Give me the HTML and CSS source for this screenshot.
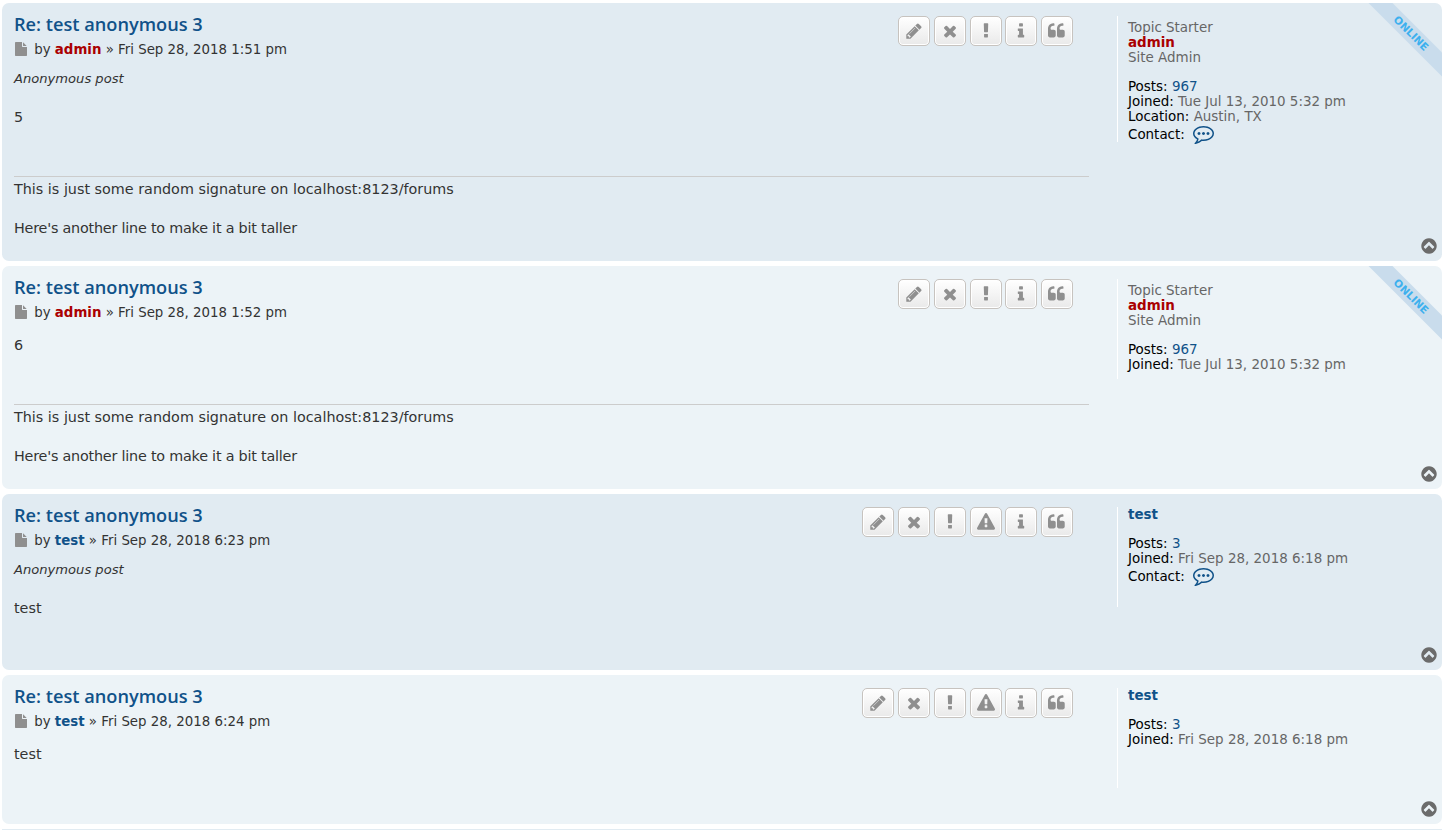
FILE: index.html
```html
<!DOCTYPE html>
<html lang="en">
<head>
    <meta charset="UTF-8">
    <meta name="viewport" content="width=device-width, initial-scale=1.0">
    <title>Re: test anonymous 3</title>
    <link rel="stylesheet" href="styles.css">
</head>
<body>
    <svg class="icon-defs" xmlns="http://www.w3.org/2000/svg">
        <symbol id="i-pencil" viewBox="0 0 1792 1792"><path d="M491 1536l91-91-235-235-91 91v107h128v128h107zm523-928q0-22-22-22-10 0-17 7l-542 542q-7 7-7 17 0 22 22 22 10 0 17-7l542-542q7-7 7-17zm-54-192l416 416-832 832h-416v-416zm683 96q0 53-37 90l-166 166-416-416 166-165q36-38 90-38 53 0 91 38l235 234q37 39 37 91z"/></symbol>
        <symbol id="i-times" viewBox="0 0 1792 1792"><path d="M1490 1322q0 40-28 68l-136 136q-28 28-68 28t-68-28l-294-294-294 294q-28 28-68 28t-68-28l-136-136q-28-28-28-68t28-68l294-294-294-294q-28-28-28-68t28-68l136-136q28-28 68-28t68 28l294 294 294-294q28-28 68-28t68 28l136 136q28 28 28 68t-28 68l-294 294 294 294q28 28 28 68z"/></symbol>
        <symbol id="i-excl" viewBox="0 0 1792 1792"><path d="M1088 1248v224q0 26-19 45t-45 19h-256q-26 0-45-19t-19-45v-224q0-26 19-45t45-19h256q26 0 45 19t19 45zm30-1056l-28 768q-1 26-20.5 45t-45.5 19h-256q-26 0-45.5-19t-20.5-45l-28-768q-1-26 17.5-45t44.5-19h320q26 0 44.5 19t17.5 45z"/></symbol>
        <symbol id="i-warn" viewBox="0 0 1792 1792"><path d="M1024 1375v-190q0-14-9.5-23.5t-22.5-9.5h-192q-13 0-22.5 9.5t-9.5 23.5v190q0 14 9.5 23.5t22.5 9.5h192q13 0 22.5-9.5t9.5-23.5zm-2-374l18-459q0-12-10-19-13-11-24-11h-220q-11 0-24 11-10 7-10 21l17 457q0 10 10 16.5t24 6.5h185q14 0 23.5-6.5t10.5-16.5zm-14-934l768 1408q35 63-2 126-17 29-46.5 46t-63.5 17h-1536q-34 0-63.5-17t-46.5-46q-37-63-2-126l768-1408q17-31 47-49t65-18 65 18 47 49z"/></symbol>
        <symbol id="i-info" viewBox="0 0 1792 1792"><path d="M1216 1344v128q0 26-19 45t-45 19h-512q-26 0-45-19t-19-45v-128q0-26 19-45t45-19h64v-384h-64q-26 0-45-19t-19-45v-128q0-26 19-45t45-19h384q26 0 45 19t19 45v576h64q26 0 45 19t19 45zm-128-1152v192q0 26-19 45t-45 19h-256q-26 0-45-19t-19-45v-192q0-26 19-45t45-19h256q26 0 45 19t19 45z"/></symbol>
        <symbol id="i-quote" viewBox="0 0 1792 1792"><path d="M768 960v384q0 80-56 136t-136 56h-384q-80 0-136-56t-56-136v-704q0-104 40.5-198.5t109.5-163.5 163.5-109.5 198.5-40.5h64q26 0 45 19t19 45v128q0 26-19 45t-45 19h-64q-106 0-181 75t-75 181v32q0 40 28 68t68 28h224q80 0 136 56t56 136zm896 0v384q0 80-56 136t-136 56h-384q-80 0-136-56t-56-136v-704q0-104 40.5-198.5t109.5-163.5 163.5-109.5 198.5-40.5h64q26 0 45 19t19 45v128q0 26-19 45t-45 19h-64q-106 0-181 75t-75 181v32q0 40 28 68t68 28h224q80 0 136 56t56 136z"/></symbol>
        <symbol id="i-file" viewBox="0 0 1792 1792"><path d="M1152 512v-472q22 14 36 28l408 408q14 14 28 36h-472zm-128 32q0 40 28 68t68 28h544v1056q0 40-28 68t-68 28h-1344q-40 0-68-28t-28-68v-1600q0-40 28-68t68-28h800v544z"/></symbol>
        <symbol id="i-top" viewBox="0 0 1792 1792"><path d="M1293 1139l102-102q19-19 19-45t-19-45l-454-454q-19-19-45-19t-45 19l-454 454q-19 19-19 45t19 45l102 102q19 19 45 19t45-19l307-307 307 307q19 19 45 19t45-19zm371-243q0 209-103 385.5t-279.5 279.5-385.5 103-385.5-103-279.5-279.5-103-385.5 103-385.5 279.5-279.5 385.5-103 385.5 103 279.5 279.5 103 385.5z"/></symbol>
        <symbol id="i-contact" viewBox="0 0 1792 1792"><path d="M640 896q0 53-37.5 90.5t-90.5 37.5-90.5-37.5-37.5-90.5 37.5-90.5 90.5-37.5 90.5 37.5 37.5 90.5zm384 0q0 53-37.5 90.5t-90.5 37.5-90.5-37.5-37.5-90.5 37.5-90.5 90.5-37.5 90.5 37.5 37.5 90.5zm384 0q0 53-37.5 90.5t-90.5 37.5-90.5-37.5-37.5-90.5 37.5-90.5 90.5-37.5 90.5 37.5 37.5 90.5zm-512-512q-204 0-381.5 69.5t-282 187.5-104.5 255q0 112 71.5 213.5t201.5 175.5l87 50-27 96q-24 91-70 172 152-63 275-171l43-38 57 6q69 8 130 8 204 0 381.5-69.5t282-187.5 104.5-255-104.5-255-282-187.5-381.5-69.5zm896 512q0 174-120 321.5t-326 233-450 85.5q-70 0-145-8-198 175-460 242-49 14-114 22h-5q-15 0-27-10.5t-16-27.5v-1q-3-4-.5-12t2-10 4.5-9.5l6-9 7-8.5 8-9q7-8 31-34.5t34.5-38 31-39.5 32.5-51 27-59 26-76q-157-89-247.5-220t-90.5-281q0-130 71-248.5t191-204.5 286-136.5 348-50.5 348 50.5 286 136.5 191 204.5 71 248.5z"/></symbol>
    </svg>

    <div class="topic">
        <!-- Post 5 -->
        <div class="post bg2">
            <div class="ribbon"><span>Online</span></div>
            <div class="postbody">
                <div class="post-head">
                    <div class="post-title">
                        <h3><a href="#">Re: test anonymous 3</a></h3>
                        <p class="author"><svg class="file-icon"><use href="#i-file"/></svg> by <a class="user admin" href="#">admin</a> » Fri Sep 28, 2018 1:51 pm</p>
                    </div>
                    <div class="post-buttons">
                        <a class="btn" href="#"><svg><use href="#i-pencil"/></svg></a>
                        <a class="btn" href="#"><svg><use href="#i-times"/></svg></a>
                        <a class="btn" href="#"><svg><use href="#i-excl"/></svg></a>
                        <a class="btn" href="#"><svg><use href="#i-info"/></svg></a>
                        <a class="btn" href="#"><svg><use href="#i-quote"/></svg></a>
                    </div>
                </div>
                <div class="content">
                    <p class="anon">Anonymous post</p>
                    <p class="text">5</p>
                </div>
                <div class="signature">This is just some random signature on localhost:8123/forums<br><br><span class="sig-tight">Here's another line to make it a bit taller</span></div>
            </div>
            <div class="profile">
                <p class="rank">Topic Starter</p>
                <p><a class="user admin" href="#">admin</a></p>
                <p class="rank">Site Admin</p>
                <div class="stats">
                    <p>Posts: <a href="#">967</a></p>
                    <p>Joined: <span>Tue Jul 13, 2010 5:32 pm</span></p>
                    <p>Location: <span>Austin, TX</span></p>
                    <p class="contact">Contact: <svg><use href="#i-contact"/></svg></p>
                </div>
            </div>
            <a class="back-top" href="#"><svg><use href="#i-top"/></svg></a>
        </div>

        <!-- Post 6 -->
        <div class="post bg1">
            <div class="ribbon"><span>Online</span></div>
            <div class="postbody">
                <div class="post-head">
                    <div class="post-title">
                        <h3><a href="#">Re: test anonymous 3</a></h3>
                        <p class="author"><svg class="file-icon"><use href="#i-file"/></svg> by <a class="user admin" href="#">admin</a> » Fri Sep 28, 2018 1:52 pm</p>
                    </div>
                    <div class="post-buttons">
                        <a class="btn" href="#"><svg><use href="#i-pencil"/></svg></a>
                        <a class="btn" href="#"><svg><use href="#i-times"/></svg></a>
                        <a class="btn" href="#"><svg><use href="#i-excl"/></svg></a>
                        <a class="btn" href="#"><svg><use href="#i-info"/></svg></a>
                        <a class="btn" href="#"><svg><use href="#i-quote"/></svg></a>
                    </div>
                </div>
                <div class="content">
                    <p class="text">6</p>
                </div>
                <div class="signature">This is just some random signature on localhost:8123/forums<br><br><span class="sig-tight">Here's another line to make it a bit taller</span></div>
            </div>
            <div class="profile">
                <p class="rank">Topic Starter</p>
                <p><a class="user admin" href="#">admin</a></p>
                <p class="rank">Site Admin</p>
                <div class="stats">
                    <p>Posts: <a href="#">967</a></p>
                    <p>Joined: <span>Tue Jul 13, 2010 5:32 pm</span></p>
                </div>
            </div>
            <a class="back-top" href="#"><svg><use href="#i-top"/></svg></a>
        </div>

        <!-- Post 7 -->
        <div class="post bg2">
            <div class="postbody">
                <div class="post-head">
                    <div class="post-title">
                        <h3><a href="#">Re: test anonymous 3</a></h3>
                        <p class="author"><svg class="file-icon"><use href="#i-file"/></svg> by <a class="user" href="#">test</a> » Fri Sep 28, 2018 6:23 pm</p>
                    </div>
                    <div class="post-buttons">
                        <a class="btn" href="#"><svg><use href="#i-pencil"/></svg></a>
                        <a class="btn" href="#"><svg><use href="#i-times"/></svg></a>
                        <a class="btn" href="#"><svg><use href="#i-excl"/></svg></a>
                        <a class="btn" href="#"><svg><use href="#i-warn"/></svg></a>
                        <a class="btn" href="#"><svg><use href="#i-info"/></svg></a>
                        <a class="btn" href="#"><svg><use href="#i-quote"/></svg></a>
                    </div>
                </div>
                <div class="content">
                    <p class="anon">Anonymous post</p>
                    <p class="text">test</p>
                </div>
            </div>
            <div class="profile">
                <p><a class="user" href="#">test</a></p>
                <div class="stats">
                    <p>Posts: <a href="#">3</a></p>
                    <p>Joined: <span>Fri Sep 28, 2018 6:18 pm</span></p>
                    <p class="contact">Contact: <svg><use href="#i-contact"/></svg></p>
                </div>
            </div>
            <a class="back-top" href="#"><svg><use href="#i-top"/></svg></a>
        </div>

        <!-- Post 8 -->
        <div class="post bg1">
            <div class="postbody">
                <div class="post-head">
                    <div class="post-title">
                        <h3><a href="#">Re: test anonymous 3</a></h3>
                        <p class="author"><svg class="file-icon"><use href="#i-file"/></svg> by <a class="user" href="#">test</a> » Fri Sep 28, 2018 6:24 pm</p>
                    </div>
                    <div class="post-buttons">
                        <a class="btn" href="#"><svg><use href="#i-pencil"/></svg></a>
                        <a class="btn" href="#"><svg><use href="#i-times"/></svg></a>
                        <a class="btn" href="#"><svg><use href="#i-excl"/></svg></a>
                        <a class="btn" href="#"><svg><use href="#i-warn"/></svg></a>
                        <a class="btn" href="#"><svg><use href="#i-info"/></svg></a>
                        <a class="btn" href="#"><svg><use href="#i-quote"/></svg></a>
                    </div>
                </div>
                <div class="content">
                    <p class="text">test</p>
                </div>
            </div>
            <div class="profile">
                <p><a class="user" href="#">test</a></p>
                <div class="stats">
                    <p>Posts: <a href="#">3</a></p>
                    <p>Joined: <span>Fri Sep 28, 2018 6:18 pm</span></p>
                </div>
            </div>
            <a class="back-top" href="#"><svg><use href="#i-top"/></svg></a>
        </div>

        <div class="post-next bg2"></div>
    </div>
</body>
</html>
```

FILE: styles.css
```css
* {
    box-sizing: border-box;
    margin: 0;
    padding: 0;
}

body {
    font-family: "DejaVu Sans", Verdana, sans-serif;
    font-size: 13.35px;
    color: #333;
    background-color: #fff;
}

a {
    color: #105289;
    text-decoration: none;
}

.icon-defs {
    display: none;
}

.topic {
    padding: 3px 7px 0 2px;
}

.post {
    position: relative;
    display: flex;
    min-height: 149px;
    margin-bottom: 5px;
    padding: 13px 0 0 12px;
    border-radius: 7px;
}

/* only the top edge of the next post is in view */
.post-next {
    height: 1px;
}

.bg1 {
    background-color: #ecf3f7;
}

.bg2 {
    background-color: #e1ebf2;
}

.postbody {
    width: 1075px;
    padding-bottom: 3px;
}

.post-head {
    display: flex;
    justify-content: space-between;
    padding-right: 16px;
}

.post-title h3 {
    margin-top: -1px;
    font-family: "Open Sans", "Liberation Sans", sans-serif;
    font-size: 18.2px;
    font-weight: 600;
    line-height: 18px;
}

.author {
    height: 18px;
    margin-top: 8px;
    line-height: 18px;
}

.file-icon {
    width: 14px;
    height: 14px;
    margin-right: 2px;
    vertical-align: -2px;
    fill: #8f8f8f;
}

.user {
    font-weight: bold;
}

.admin {
    color: #a00;
}

.post-buttons {
    display: flex;
    gap: 3.75px;
}

.btn {
    display: flex;
    align-items: center;
    justify-content: center;
    width: 32px;
    height: 30px;
    border: 1px solid #c7c3bf;
    border-radius: 5px;
    background: linear-gradient(#fff, #e9e9e9);
    box-shadow: 0 0 0 1px #fff inset;
}

.btn svg {
    width: 18px;
    height: 18px;
    fill: #8f8f8f;
}

.content {
    margin-top: 14px;
}

.anon {
    margin-top: -3px;
    margin-bottom: 20px;
    font-size: 13.1px;
    font-style: italic;
    line-height: 18px;
}

.text {
    padding-bottom: 50px;
    font-size: 14.35px;
    line-height: 18px;
}

.signature {
    padding: 3px 0 19.5px;
    border-top: 1px solid #ccc;
    font-size: 14.35px;
    line-height: 19.5px;
}

.sig-tight {
    letter-spacing: -0.21px;
}

.profile {
    min-height: 100px;
    height: fit-content;
    margin-left: 28px;
    padding-left: 10px;
    border-left: 1px solid #fff;
    font-size: 13.45px;
    line-height: 15px;
}

.rank {
    color: #666;
}

.rank:first-child {
    margin-top: 4px;
}

.stats {
    margin-top: 14px;
    color: #000;
}

.stats span {
    color: #666;
}

.contact {
    display: flex;
    align-items: flex-end;
    gap: 4px;
    height: 18px;
    white-space: pre;
}

.contact svg {
    align-self: center;
    width: 21px;
    height: 21px;
    fill: #105289;
}

.back-top {
    position: absolute;
    right: 5px;
    bottom: 7px;
    width: 16px;
    height: 16px;
}

.back-top svg {
    display: block;
    width: 18px;
    height: 18px;
    margin: -1px;
    fill: #6b6b6b;
}

.ribbon {
    position: absolute;
    top: 0;
    right: 0;
    width: 74px;
    height: 74px;
    overflow: hidden;
}

.ribbon span {
    position: absolute;
    top: 22px;
    left: -12px;
    width: 110px;
    height: 17px;
    background-color: #c9dcec;
    color: #3cb0ee;
    font-size: 10.5px;
    font-weight: bold;
    line-height: 17px;
    text-align: center;
    text-transform: uppercase;
    transform: rotate(45deg);
}
```
